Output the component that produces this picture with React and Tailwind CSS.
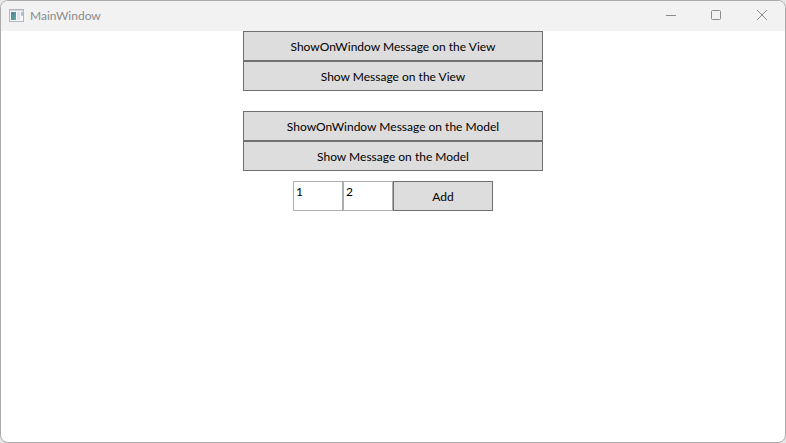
import { useState } from "react";

function AppIcon() {
  return (
    <svg width="16" height="16" viewBox="0 0 16 16" shapeRendering="crispEdges">
      <defs>
        <linearGradient id="pane" x1="0" y1="0" x2="1" y2="1">
          <stop offset="0" stopColor="#4d7fa8" />
          <stop offset="1" stopColor="#5fae8c" />
        </linearGradient>
      </defs>
      <rect x="0" y="1" width="15" height="13" fill="#b4b7bd" />
      <rect x="1" y="2" width="13" height="1" fill="#d2d5db" />
      <rect x="1" y="3" width="13" height="10" fill="#f6f6f8" />
      <rect x="2" y="4" width="5" height="8" fill="url(#pane)" />
      <rect x="8" y="4" width="3" height="8" fill="#e2e4e9" />
      <rect x="12" y="4" width="2" height="3" fill="#a9bdd6" />
      <rect x="12" y="7" width="2" height="1" fill="#b5d3c2" />
    </svg>
  );
}

function CaptionButton({ label, children }) {
  return (
    <button
      aria-label={label}
      className="flex w-[46px] items-center justify-center text-[#8c8c8c]"
    >
      <svg
        width="12"
        height="12"
        viewBox="0 0 12 12"
        fill="none"
        stroke="currentColor"
      >
        {children}
      </svg>
    </button>
  );
}

function TitleBar() {
  return (
    <header className="flex h-[30px] shrink-0 items-stretch justify-between bg-[#f2f2f2]">
      <div className="flex items-center gap-1 pl-2">
        <AppIcon />
        <h1 className="pl-px text-xs text-[#8c8c8c]">MainWindow</h1>
      </div>
      <div className="flex">
        <CaptionButton label="Minimize">
          <path d="M2 5.5h10" />
        </CaptionButton>
        <CaptionButton label="Maximize">
          <rect x="1.5" y="0.5" width="9" height="9" rx="1" />
        </CaptionButton>
        <CaptionButton label="Close">
          <path d="M1 0l10 10M11 0L1 10" />
        </CaptionButton>
      </div>
    </header>
  );
}

function Button({ className, children }) {
  return (
    <button
      className={`h-[30px] border border-[#707070] bg-[#dddddd] pt-px text-xs text-black ${className}`}
    >
      {children}
    </button>
  );
}

function NumberBox({ label, value, onChange }) {
  return (
    <input
      type="text"
      aria-label={label}
      value={value}
      onChange={(e) => onChange(e.target.value)}
      className="h-[30px] w-[50px] border border-[#abadb3] bg-white px-[2px] pb-[10px] text-xs text-black outline-none"
    />
  );
}

export default function App() {
  const [left, setLeft] = useState("1");
  const [right, setRight] = useState("2");

  return (
    <div className="h-screen bg-[#e6e6e6] font-['Lato',sans-serif]">
      <div className="flex h-full flex-col overflow-hidden rounded-lg border border-[#ababab] bg-white">
        <TitleBar />
        <main className="flex flex-col items-center">
          <Button className="w-[300px]">ShowOnWindow Message on the View</Button>
          <Button className="w-[300px]">Show Message on the View</Button>

          <Button className="mt-5 w-[300px]">
            ShowOnWindow Message on the Model
          </Button>
          <Button className="w-[300px]">Show Message on the Model</Button>

          <div className="mt-[10px] flex">
            <NumberBox label="Left value" value={left} onChange={setLeft} />
            <NumberBox label="Right value" value={right} onChange={setRight} />
            <Button className="w-[100px]">Add</Button>
          </div>
        </main>
      </div>
    </div>
  );
}
